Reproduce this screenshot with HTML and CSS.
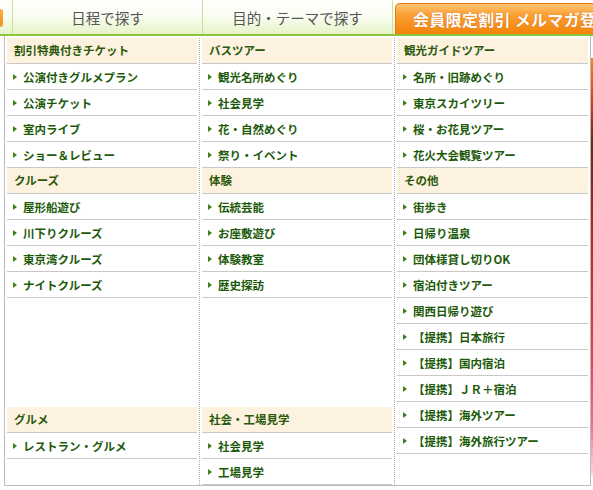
FILE: index.html
```html
<!DOCTYPE html>
<html lang="ja">
<head>
<meta charset="utf-8">
<title>メニュー</title>
<link rel="stylesheet" href="styles.css">
</head>
<body>
<div class="page">
  <nav class="gnav">
    <span class="gnav-prev"></span>
    <a class="gnav-tab">日程で探す</a>
    <a class="gnav-tab gnav-tab--last">目的・テーマで探す</a>
    <a class="gnav-member">会員限定割引 メルマガ登録</a>
  </nav>

  <main class="content">
    <div class="hero"></div>
    <div class="cards">
      <div class="card card--blue"></div>
      <div class="card card--red"></div>
      <div class="card card--orange"></div>
    </div>
  </main>

  <div class="mega">
    <div class="mega-col">
      <section class="sec">
        <h3 class="sec-title">割引特典付きチケット</h3>
        <ul class="sec-list">
          <li class="sec-item">公演付きグルメプラン</li>
          <li class="sec-item">公演チケット</li>
          <li class="sec-item">室内ライブ</li>
          <li class="sec-item">ショー＆レビュー</li>
        </ul>
      </section>
      <section class="sec">
        <h3 class="sec-title">クルーズ</h3>
        <ul class="sec-list">
          <li class="sec-item">屋形船遊び</li>
          <li class="sec-item">川下りクルーズ</li>
          <li class="sec-item">東京湾クルーズ</li>
          <li class="sec-item">ナイトクルーズ</li>
        </ul>
      </section>
      <section class="sec sec--bottom sec--tall">
        <h3 class="sec-title">グルメ</h3>
        <ul class="sec-list">
          <li class="sec-item">レストラン・グルメ</li>
        </ul>
      </section>
    </div>

    <div class="mega-col">
      <section class="sec">
        <h3 class="sec-title">バスツアー</h3>
        <ul class="sec-list">
          <li class="sec-item">観光名所めぐり</li>
          <li class="sec-item">社会見学</li>
          <li class="sec-item">花・自然めぐり</li>
          <li class="sec-item">祭り・イベント</li>
        </ul>
      </section>
      <section class="sec">
        <h3 class="sec-title">体験</h3>
        <ul class="sec-list">
          <li class="sec-item">伝統芸能</li>
          <li class="sec-item">お座敷遊び</li>
          <li class="sec-item">体験教室</li>
          <li class="sec-item">歴史探訪</li>
        </ul>
      </section>
      <section class="sec sec--bottom">
        <h3 class="sec-title">社会・工場見学</h3>
        <ul class="sec-list">
          <li class="sec-item">社会見学</li>
          <li class="sec-item">工場見学</li>
        </ul>
      </section>
    </div>

    <div class="mega-col mega-col--last">
      <section class="sec">
        <h3 class="sec-title">観光ガイドツアー</h3>
        <ul class="sec-list">
          <li class="sec-item">名所・旧跡めぐり</li>
          <li class="sec-item">東京スカイツリー</li>
          <li class="sec-item">桜・お花見ツアー</li>
          <li class="sec-item">花火大会観覧ツアー</li>
        </ul>
      </section>
      <section class="sec">
        <h3 class="sec-title">その他</h3>
        <ul class="sec-list">
          <li class="sec-item">街歩き</li>
          <li class="sec-item">日帰り温泉</li>
          <li class="sec-item">団体様貸し切りOK</li>
          <li class="sec-item">宿泊付きツアー</li>
          <li class="sec-item">関西日帰り遊び</li>
          <li class="sec-item">【提携】日本旅行</li>
          <li class="sec-item">【提携】国内宿泊</li>
          <li class="sec-item">【提携】ＪＲ＋宿泊</li>
          <li class="sec-item">【提携】海外ツアー</li>
          <li class="sec-item">【提携】海外旅行ツアー</li>
        </ul>
      </section>
    </div>
  </div>
</div>
</body>
</html>
```

FILE: styles.css
```css
* { box-sizing: border-box; }

html, body {
  margin: 0;
  padding: 0;
  background: #fff;
}

body {
  font-family: "Noto Sans CJK JP", "Noto Sans", sans-serif;
}

.page {
  position: relative;
  width: 593px;
  height: 490px;
  overflow: hidden;
}

/* ---------- global nav ---------- */
.gnav {
  display: flex;
  align-items: flex-end;
  height: 36px;
  width: 800px;
  background: linear-gradient(#ffffff 0%, #fbfdf4 45%, #e6f4c8 100%);
  border-bottom: 2px solid #8dc43c;
}

.gnav-prev {
  align-self: flex-start;
  width: 3px;
  height: 18px;
  margin-top: 9px;
  margin-right: 9px;
  background: linear-gradient(#ffb14d, #f58a12);
  border: 1px solid #f0a030;
  border-left: none;
  border-radius: 0 4px 4px 0;
}

.gnav-tab {
  display: flex;
  align-items: center;
  justify-content: center;
  align-self: stretch;
  width: 190px;
  border-left: 1px solid #c9e29a;
  font-size: 14.5px;
  color: #555;
  padding-top: 1px;
}

.gnav-tab--last {
  width: 191px;
  border-right: 1px solid #c9e29a;
}

.gnav-member {
  display: flex;
  align-items: center;
  height: 31px;
  margin-left: 2px;
  padding-left: 17px;
  width: 260px;
  border: 1px solid #e07810;
  border-bottom: none;
  border-radius: 5px 5px 0 0;
  background: linear-gradient(#ffc575 0%, #fca035 35%, #f38208 100%);
  color: #fff;
  font-weight: bold;
  font-size: 16px;
  letter-spacing: 0.3px;
  text-shadow: 0 0 1px rgba(150, 60, 0, 0.6);
  white-space: nowrap;
}

/* ---------- page content behind the menu ---------- */
.content {
  padding: 22px 0 0 12px;
  width: 800px;
}

.hero {
  height: 418px;
  background: linear-gradient(#f6861a 0%, #e0401c 10%, #6a2a18 20%, #c02828 45%, #e04050 70%, #f07080 88%, #f7e0e0 100%);
}

.cards {
  display: flex;
  gap: 12px;
  margin-top: 28px;
}

.card {
  width: 204px;
  height: 60px;
  border: 2px solid;
}

.card--blue { border-color: #1aa0e0; background: linear-gradient(90deg, #4aa0d8, #a8d0ec 50%, #3a90d0); }
.card--red { border-color: #d02010; background: #5a2414; }
.card--orange { border-color: #f08a20; background: linear-gradient(90deg, #fff4e4, #c8dcf0); }

/* ---------- mega dropdown ---------- */
.mega {
  position: absolute;
  top: 36px;
  left: 4px;
  width: 587px;
  height: 450px;
  padding-top: 2px;
  background: #fff;
  border: 1px solid #bdbdbd;
  border-top: none;
  display: grid;
  grid-template-columns: repeat(3, 195px);
}

.mega-col {
  display: flex;
  flex-direction: column;
  padding: 0 2px;
  border-right: 1px dotted #a8a8a8;
}

.mega-col--last {
  border-right: none;
}

.sec {
  display: flex;
  flex-direction: column;
}

.sec--bottom {
  margin-top: auto;
}

.sec--tall {
  min-height: 78px;
}

.sec-title {
  margin: 0;
  height: 26px;
  line-height: 25px;
  padding-left: 7px;
  background: #fdf2e0;
  border-bottom: 1px solid #c8c8c8;
  font-size: 11.5px;
  font-weight: bold;
  color: #2b580a;
}

.sec-list {
  list-style: none;
  margin: 0;
  padding: 0;
}

.sec-item {
  display: flex;
  align-items: center;
  height: 26px;
  padding-left: 6px;
  border-bottom: 1px solid #c8c8c8;
  font-size: 11.5px;
  font-weight: bold;
  color: #1c5a0a;
  white-space: nowrap;
}

.sec-item::before {
  content: "";
  width: 0;
  height: 0;
  margin-right: 6px;
  border-left: 4px solid #3f7f18;
  border-top: 3px solid transparent;
  border-bottom: 3px solid transparent;
}
```
